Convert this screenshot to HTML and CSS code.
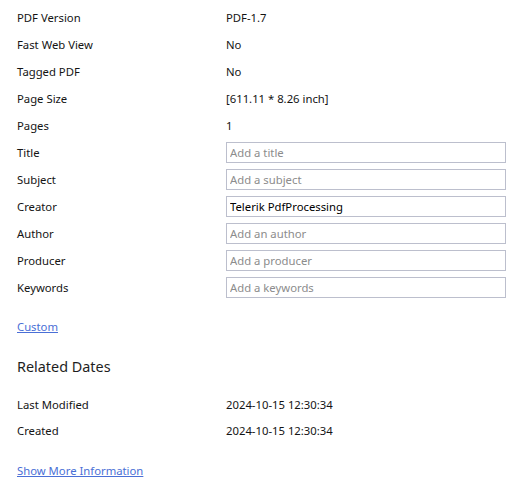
FILE: index.html
```html
<!DOCTYPE html>
<html lang="en">
<head>
    <meta charset="UTF-8">
    <title>Document Properties</title>
    <link rel="stylesheet" href="styles.css">
</head>
<body>

    <div class="props">
        <div class="grid">
            <div class="label">PDF Version</div>
            <div class="value">PDF-1.7</div>

            <div class="label">Fast Web View</div>
            <div class="value">No</div>

            <div class="label">Tagged PDF</div>
            <div class="value">No</div>

            <div class="label">Page Size</div>
            <div class="value">[611.11 * 8.26 inch]</div>

            <div class="label">Pages</div>
            <div class="value">1</div>

            <div class="label">Title</div>
            <input class="field" type="text" placeholder="Add a title">

            <div class="label">Subject</div>
            <input class="field" type="text" placeholder="Add a subject">

            <div class="label">Creator</div>
            <input class="field" type="text" value="Telerik PdfProcessing">

            <div class="label">Author</div>
            <input class="field" type="text" placeholder="Add an author">

            <div class="label">Producer</div>
            <input class="field" type="text" placeholder="Add a producer">

            <div class="label">Keywords</div>
            <input class="field" type="text" placeholder="Add a keywords">
        </div>

        <a class="link custom" href="#">Custom</a>

        <h2>Related Dates</h2>

        <div class="grid dates">
            <div class="label">Last Modified</div>
            <div class="value">2024-10-15 12:30:34</div>

            <div class="label">Created</div>
            <div class="value">2024-10-15 12:30:34</div>
        </div>

        <a class="link more" href="#">Show More Information</a>
    </div>

</body>
</html>
```

FILE: styles.css
```css
body {
    margin: 0;
    background-color: #fff;
    font-family: "Noto Sans", "Open Sans", sans-serif;
    font-size: 11.3px;
    color: #141414;
}
.props {
    padding: 7px 18px 0 17px;
}
.grid {
    display: grid;
    grid-template-columns: 209px 280px;
    grid-auto-rows: 21px;
    row-gap: 6px;
    align-items: center;
}
.label,
.value {
    line-height: 21px;
}
.field {
    box-sizing: border-box;
    width: 280px;
    height: 21px;
    margin: 0;
    padding: 0 3px;
    border: 1px solid #bcbfcd;
    border-radius: 0;
    font-family: inherit;
    font-size: 11.3px;
    color: #000;
    outline: none;
}
.field::placeholder {
    color: #8c8c8c;
}
.link {
    display: inline-block;
    color: #4a6fd6;
    text-decoration: underline;
    line-height: 16px;
}
.custom {
    margin-top: 21px;
}
h2 {
    margin: 21px 0 0;
    font-size: 14.4px;
    font-weight: normal;
    line-height: 21px;
    color: #1e1e1e;
}
.dates {
    margin-top: 17px;
    row-gap: 5px;
}
.more {
    margin-top: 22px;
}
```
